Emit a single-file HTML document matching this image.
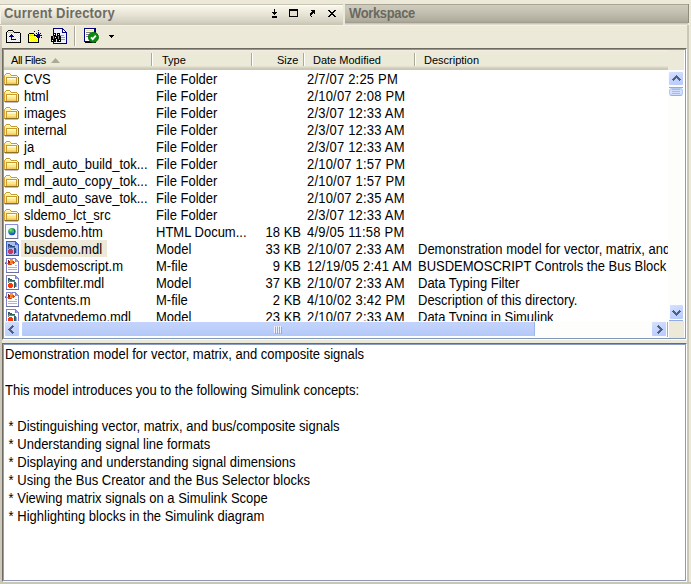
<!DOCTYPE html>
<html><head><meta charset="utf-8">
<style>
*{box-sizing:border-box}
html,body{margin:0;padding:0}
body{width:691px;height:584px;overflow:hidden;position:relative;background:#ECE9D8;font-family:"Liberation Sans",sans-serif;color:#000}
.a{position:absolute}
.t{position:absolute;white-space:pre;font-size:13px;line-height:17px}
.r{position:absolute;white-space:pre;font-size:13px;line-height:17px;transform:scaleY(1.08);transform-origin:0 13px}
.h{position:absolute;white-space:pre;font-size:11px;line-height:13px}
svg{position:absolute;overflow:visible}
</style></head><body>
<svg width="0" height="0" style="position:absolute"><defs><symbol id="i-folder" viewBox="0 0 16 16"><path fill="#C79B2C" d="M3 2h4v1h-4zM2 3h1v1h-1zM7 3h1v1h-1zM8 4h6v1h-6zM14 5h1v1h-1zM3 6h11v1h-11zM3 7h1v1h-1zM13 7h1v1h-1zM3 8h1v1h-1zM13 8h1v1h-1zM3 9h1v1h-1zM13 9h1v1h-1zM3 10h1v1h-1zM13 10h1v1h-1zM3 11h1v1h-1zM13 11h1v1h-1zM3 12h1v1h-1zM13 12h1v1h-1z"/><path fill="#FFFDE6" d="M3 3h4v1h-4zM8 5h6v1h-6zM4 7h9v1h-9z"/><path fill="#E3A83A" d="M1 4h1v1h-1zM1 5h1v1h-1zM1 6h1v1h-1zM1 7h1v1h-1zM1 8h1v1h-1zM1 9h1v1h-1zM1 10h1v1h-1zM1 11h1v1h-1zM1 12h1v1h-1z"/><path fill="#FFEF98" d="M2 4h6v1h-6zM2 5h6v1h-6zM2 6h1v1h-1zM14 6h1v1h-1zM2 7h1v1h-1zM14 7h1v1h-1zM2 8h1v1h-1zM14 8h1v1h-1zM2 9h1v1h-1zM14 9h1v1h-1zM2 10h1v1h-1zM14 10h1v1h-1zM2 11h1v1h-1zM14 11h1v1h-1zM2 12h1v1h-1zM14 12h1v1h-1z"/><path fill="#8C7222" d="M15 6h1v1h-1zM15 7h1v1h-1zM15 8h1v1h-1zM15 9h1v1h-1zM15 10h1v1h-1zM15 11h1v1h-1zM15 12h1v1h-1zM2 13h13v1h-13z"/><path fill="#FFF3A6" d="M4 8h9v1h-9z"/><path fill="#FEE68C" d="M4 9h9v1h-9zM4 10h9v1h-9z"/><path fill="#F9D66E" d="M4 11h9v1h-9z"/><path fill="#F5CA5C" d="M4 12h9v1h-9z"/><path fill="#B89A60" d="M1 13h1v1h-1zM15 13h1v1h-1z"/><path fill="#C2BCCB" d="M2 14h13v1h-13z"/></symbol><symbol id="i-html" viewBox="0 0 16 16"><path fill="#8A8FD6" d="M1 1h13v1h-13zM1 2h1v1h-1zM13 2h1v1h-1zM1 3h1v1h-1zM13 3h1v1h-1zM1 4h1v1h-1zM13 4h1v1h-1zM1 5h1v1h-1zM13 5h1v1h-1zM1 6h1v1h-1zM13 6h1v1h-1zM1 7h1v1h-1zM13 7h1v1h-1zM1 8h1v1h-1zM13 8h1v1h-1zM1 9h1v1h-1zM13 9h1v1h-1zM1 10h1v1h-1zM13 10h1v1h-1zM1 11h1v1h-1zM13 11h1v1h-1zM1 12h1v1h-1zM13 12h1v1h-1zM1 13h1v1h-1zM13 13h1v1h-1zM1 14h1v1h-1zM13 14h1v1h-1z"/><path fill="#F6F9FF" d="M2 2h11v1h-11zM2 3h11v1h-11zM2 4h11v1h-11zM2 5h11v1h-11zM2 6h11v1h-11zM2 7h11v1h-11zM2 8h11v1h-11zM2 9h11v1h-11zM2 10h11v1h-11zM2 11h11v1h-11zM2 12h11v1h-11zM2 13h11v1h-11zM2 14h11v1h-11z"/><path fill="#CFD0EC" d="M14 2h1v1h-1zM14 3h1v1h-1zM14 4h1v1h-1zM14 5h1v1h-1zM14 6h1v1h-1zM14 7h1v1h-1zM14 8h1v1h-1zM14 9h1v1h-1zM14 10h1v1h-1zM14 11h1v1h-1zM14 12h1v1h-1zM14 13h1v1h-1zM14 14h1v1h-1zM14 15h1v1h-1z"/><path fill="#6A6C8C" d="M1 15h13v1h-13z"/><defs><radialGradient id="gl" cx="0.35" cy="0.3" r="0.8"><stop offset="0" stop-color="#9BE86A"/><stop offset="0.35" stop-color="#2FB03A"/><stop offset="0.6" stop-color="#1E70C8"/><stop offset="1" stop-color="#1530C0"/></radialGradient></defs><circle cx="7.9" cy="8.6" r="3.7" fill="url(#gl)" shape-rendering="geometricPrecision"/><path d="M8.6 7.2 l1.6 0.6 l-0.4 1.8 l-1.4 0.2z" fill="#38B8F0" shape-rendering="geometricPrecision"/><path d="M9.9 6.4 l1.2 1.2 l-0.1 1.9 l-0.9 -0.5z" fill="#0F7A22" shape-rendering="geometricPrecision"/></symbol><symbol id="i-m" viewBox="0 0 16 16"><path fill="#7F84CC" d="M2 1h10v1h-10zM2 2h1v1h-1zM11 2h2v1h-2zM2 3h1v1h-1zM11 3h1v1h-1zM13 3h1v1h-1zM2 4h1v1h-1zM11 4h1v1h-1zM14 4h1v1h-1zM2 5h1v1h-1zM14 5h1v1h-1zM2 6h1v1h-1zM14 6h1v1h-1zM2 7h1v1h-1zM14 7h1v1h-1zM2 8h1v1h-1zM14 8h1v1h-1zM2 9h1v1h-1zM14 9h1v1h-1zM2 10h1v1h-1zM14 10h1v1h-1zM2 11h1v1h-1zM14 11h1v1h-1zM2 12h1v1h-1zM14 12h1v1h-1zM2 13h1v1h-1zM14 13h1v1h-1zM2 14h1v1h-1zM14 14h1v1h-1z"/><path fill="#FFFFFF" d="M3 2h8v1h-8zM3 3h8v1h-8zM3 4h8v1h-8zM3 5h11v1h-11zM3 6h11v1h-11zM3 7h11v1h-11zM3 8h11v1h-11zM3 9h11v1h-11zM3 10h11v1h-11zM3 11h11v1h-11zM3 12h11v1h-11zM3 13h11v1h-11zM3 14h11v1h-11z"/><path fill="#9AA0D8" d="M12 3h1v1h-1zM12 4h2v1h-2z"/><path fill="#6E6F98" d="M2 15h13v1h-13z"/><path fill="#B4B4C4" d="M11 8h2v1h-2zM4 10h9v1h-9zM4 12h9v1h-9z"/><path fill="#F7902E" d="M7 1h1v1h-1zM6 2h3v1h-3zM6 3h3v1h-3zM6 4h2v1h-2zM6 5h1v1h-1zM6 6h3v1h-3z"/><path fill="#8E1A1A" d="M4 3h1v1h-1zM4 4h2v1h-2zM4 5h2v1h-2z"/><path fill="#F06A20" d="M8 4h1v1h-1zM7 5h2v1h-2zM7 7h1v1h-1z"/><path fill="#D8400E" d="M9 4h1v1h-1zM9 5h2v1h-2zM4 6h2v1h-2zM9 6h1v1h-1zM4 7h3v1h-3z"/><path fill="#5AAAD8" d="M1 5h1v1h-1zM2 6h2v1h-2z"/><path fill="#2A6CA0" d="M1 6h1v1h-1z"/></symbol><symbol id="i-mdl" viewBox="0 0 16 16"><path fill="#7F84CC" d="M2 1h10v1h-10zM2 2h1v1h-1zM11 2h2v1h-2zM2 3h1v1h-1zM11 3h1v1h-1zM13 3h1v1h-1zM2 4h1v1h-1zM11 4h1v1h-1zM14 4h1v1h-1zM2 5h1v1h-1zM14 5h1v1h-1zM2 6h1v1h-1zM14 6h1v1h-1zM2 7h1v1h-1zM14 7h1v1h-1zM2 8h1v1h-1zM14 8h1v1h-1zM2 9h1v1h-1zM14 9h1v1h-1zM2 10h1v1h-1zM14 10h1v1h-1zM2 11h1v1h-1zM14 11h1v1h-1zM2 12h1v1h-1zM14 12h1v1h-1zM2 13h1v1h-1zM14 13h1v1h-1zM2 14h1v1h-1zM14 14h1v1h-1z"/><path fill="#FFFFFF" d="M3 2h8v1h-8zM3 3h8v1h-8zM3 4h8v1h-8zM3 5h11v1h-11zM3 6h11v1h-11zM3 7h11v1h-11zM3 8h11v1h-11zM3 9h11v1h-11zM3 10h11v1h-11zM3 11h11v1h-11zM3 12h11v1h-11zM3 13h11v1h-11zM3 14h11v1h-11z"/><path fill="#9AA0D8" d="M12 3h1v1h-1zM12 4h2v1h-2z"/><path fill="#6E6F98" d="M2 15h13v1h-13z"/><path fill="#2F5F5E" d="M4 4h2v1h-2zM4 5h4v1h-4zM4 6h1v1h-1zM6 6h5v1h-5zM10 8h1v1h-1zM10 9h1v1h-1zM10 10h1v1h-1zM10 11h1v1h-1zM10 12h1v1h-1zM10 13h1v1h-1z"/><path fill="#D08030" d="M5 6h1v1h-1z"/><path fill="#6A8A70" d="M4 7h7v1h-7zM4 8h1v1h-1z"/><path fill="#4A5CA8" d="M11 8h1v1h-1zM11 9h1v1h-1zM11 10h1v1h-1zM11 11h1v1h-1zM11 12h1v1h-1z"/><path fill="#FA3A06" d="M5 9h3v1h-3zM4 10h5v1h-5zM4 11h5v1h-5zM4 12h5v1h-5zM5 13h3v1h-3z"/><path fill="#8FA8E8" d="M12 9h1v1h-1zM12 10h1v1h-1zM12 11h1v1h-1zM12 12h1v1h-1z"/></symbol><symbol id="i-mdlsel" viewBox="0 0 16 16"><path fill="#3F60C4" d="M2 1h10v1h-10zM2 2h1v1h-1zM11 2h2v1h-2zM2 3h1v1h-1zM11 3h1v1h-1zM13 3h1v1h-1zM2 4h1v1h-1zM11 4h1v1h-1zM14 4h1v1h-1zM2 5h1v1h-1zM14 5h1v1h-1zM2 6h1v1h-1zM14 6h1v1h-1zM2 7h1v1h-1zM14 7h1v1h-1zM2 8h1v1h-1zM14 8h1v1h-1zM2 9h1v1h-1zM14 9h1v1h-1zM2 10h1v1h-1zM14 10h1v1h-1zM2 11h1v1h-1zM14 11h1v1h-1zM2 12h1v1h-1zM14 12h1v1h-1zM2 13h1v1h-1zM14 13h1v1h-1zM2 14h1v1h-1zM14 14h1v1h-1z"/><path fill="#A9BEEE" d="M3 2h8v1h-8zM3 3h8v1h-8zM3 4h8v1h-8zM3 5h11v1h-11zM3 6h11v1h-11zM3 7h11v1h-11zM3 8h11v1h-11zM3 9h11v1h-11zM3 10h11v1h-11zM3 11h11v1h-11zM3 12h11v1h-11zM3 13h11v1h-11zM3 14h11v1h-11z"/><path fill="#5A78D0" d="M12 3h1v1h-1zM12 4h2v1h-2z"/><path fill="#3A4C98" d="M2 15h13v1h-13z"/><path fill="#2C4C80" d="M4 4h2v1h-2zM4 5h4v1h-4zM4 6h1v1h-1zM6 6h5v1h-5zM10 8h1v1h-1zM10 9h1v1h-1zM10 10h1v1h-1zM10 11h1v1h-1zM10 12h1v1h-1zM10 13h1v1h-1z"/><path fill="#8A70A0" d="M5 6h1v1h-1z"/><path fill="#5A78B0" d="M4 7h7v1h-7zM4 8h1v1h-1z"/><path fill="#3048A8" d="M11 8h1v1h-1zM11 9h1v1h-1zM11 10h1v1h-1zM11 11h1v1h-1zM11 12h1v1h-1z"/><path fill="#C03A62" d="M5 9h3v1h-3zM4 10h5v1h-5zM4 11h5v1h-5zM4 12h5v1h-5zM5 13h3v1h-3z"/><path fill="#7F9AE8" d="M12 9h1v1h-1zM12 10h1v1h-1zM12 11h1v1h-1zM12 12h1v1h-1z"/></symbol></defs></svg>
<!-- outer edges -->
<div class="a" style="left:0;top:25px;width:1px;height:559px;background:#CEC8BC"></div>
<div class="a" style="left:1px;top:25px;width:1px;height:559px;background:#CACCB8"></div>
<div class="a" style="left:687px;top:25px;width:1px;height:559px;background:#CFC6B9"></div>
<div class="a" style="left:688px;top:25px;width:1px;height:559px;background:#C9C7B4"></div>
<div class="a" style="left:0;top:582px;width:691px;height:2px;background:#C8C6B4"></div>

<!-- title bar Current Directory -->
<div class="a" style="left:0;top:4px;width:343px;height:21px;background:linear-gradient(#C8C5B5 0,#C8C5B5 1px,#FFFFF4 1px,#F6F4E8 3px,#E6E3D4 11px,#D3D0C1 18px,#CAC7B7 20px,#CAC7B7 21px)"></div>
<div class="a" style="left:0;top:5px;width:1px;height:19px;background:#F4F2E6"></div>
<div class="t" style="left:4px;top:5px;font-weight:bold;color:#6E6C63;line-height:17px;letter-spacing:0.19px;transform:scaleY(1.1);transform-origin:0 13px">Current Directory</div>
<svg width="80" height="12" style="left:270px;top:8px" shape-rendering="crispEdges">
 <path fill="#000" d="M4 1h1v4h-1z M2 4h5v1h-5z M3 5h3v1h-3z M4 6h1v1h-1z M2 8h5v2h-5z"/>
 <path fill="#000" d="M19 1h9v2h-9z M19 3h1v6h-1z M27 3h1v6h-1z M19 8h9v1h-9z"/>
 <path fill="#E2DFD2" d="M20 3h7v5h-7z"/>
 <path fill="#000" d="M41 2h4v1h-4z M42 3h3v1h-3z M41 4h4v1h-4z M40 5h3v1h-3z M44 5h1v1h-1z M40 6h2v1h-2z M40 7h1v1h-1z M41 8h1v1h-1z"/>
 <path fill="#000" d="M58 2h2v1h-2z M64 2h2v1h-2z M59 3h2v1h-2z M63 3h2v1h-2z M60 4h4v1h-4z M61 5h2v1h-2z M60 6h4v1h-4z M59 7h2v1h-2z M63 7h2v1h-2z M58 8h2v1h-2z M64 8h2v1h-2z"/>
</svg>

<!-- workspace tab -->
<div class="a" style="left:345px;top:4px;width:344px;height:19px;background:linear-gradient(#A9A697 0,#A9A697 1px,#CFCCBD 1px,#C4C1B2 8px,#AEAB9C 17px,#9E9B8D 19px);border-right:1px solid #8F8C7E"></div>
<div class="a" style="left:345px;top:23px;width:343px;height:1px;background:#C8C6B8"></div>
<div class="a" style="left:345px;top:24px;width:343px;height:1px;background:#DEDBCE"></div>
<div class="t" style="left:349px;top:5px;font-weight:bold;color:#6A695F;letter-spacing:-0.35px;transform:scaleY(1.1);transform-origin:0 13px">Workspace</div>

<!-- toolbar top highlight -->
<div class="a" style="left:0;top:25px;width:687px;height:1px;background:#F3F1E6"></div>
<svg width="16" height="16" style="left:5px;top:28px" shape-rendering="crispEdges"><path fill="#000000" d="M3 2h5v1h-5zM2 3h1v1h-1zM8 3h1v1h-1zM1 4h1v1h-1zM9 4h6v1h-6zM1 5h1v1h-1zM15 5h1v1h-1zM1 6h1v1h-1zM15 6h1v1h-1zM1 7h1v1h-1zM15 7h1v1h-1zM1 8h1v1h-1zM15 8h1v1h-1zM1 9h1v1h-1zM15 9h1v1h-1zM1 10h1v1h-1zM15 10h1v1h-1zM1 11h1v1h-1zM15 11h1v1h-1zM1 12h1v1h-1zM15 12h1v1h-1zM1 13h1v1h-1zM15 13h1v1h-1zM1 14h15v1h-15z"/><path fill="#FFFF00" d="M3 3h1v1h-1zM5 3h1v1h-1zM7 3h1v1h-1zM2 4h1v1h-1zM3 5h1v1h-1zM5 5h1v1h-1zM7 5h1v1h-1zM9 5h1v1h-1zM11 5h1v1h-1zM13 5h1v1h-1zM2 6h1v1h-1zM4 6h1v1h-1zM8 6h1v1h-1zM10 6h1v1h-1zM12 6h1v1h-1zM14 6h1v1h-1zM3 7h1v1h-1zM9 7h1v1h-1zM11 7h1v1h-1zM13 7h1v1h-1zM2 8h1v1h-1zM10 8h1v1h-1zM12 8h1v1h-1zM14 8h1v1h-1zM3 9h1v1h-1zM5 9h1v1h-1zM7 9h1v1h-1zM9 9h1v1h-1zM11 9h1v1h-1zM13 9h1v1h-1zM2 10h1v1h-1zM4 10h1v1h-1zM8 10h1v1h-1zM10 10h1v1h-1zM12 10h1v1h-1zM14 10h1v1h-1zM3 11h1v1h-1zM5 11h1v1h-1zM11 11h1v1h-1zM13 11h1v1h-1zM2 12h1v1h-1zM4 12h1v1h-1zM6 12h1v1h-1zM8 12h1v1h-1zM10 12h1v1h-1zM12 12h1v1h-1zM14 12h1v1h-1zM3 13h1v1h-1zM5 13h1v1h-1zM7 13h1v1h-1zM9 13h1v1h-1zM11 13h1v1h-1zM13 13h1v1h-1z"/><path fill="#FFFFFF" d="M4 3h1v1h-1zM6 3h1v1h-1zM2 5h1v1h-1zM4 5h1v1h-1zM6 5h1v1h-1zM8 5h1v1h-1zM10 5h1v1h-1zM12 5h1v1h-1zM14 5h1v1h-1zM3 6h1v1h-1zM5 6h1v1h-1zM7 6h1v1h-1zM9 6h1v1h-1zM11 6h1v1h-1zM13 6h1v1h-1zM2 7h1v1h-1zM4 7h1v1h-1zM8 7h1v1h-1zM10 7h1v1h-1zM12 7h1v1h-1zM14 7h1v1h-1zM3 8h1v1h-1zM9 8h1v1h-1zM11 8h1v1h-1zM13 8h1v1h-1zM2 9h1v1h-1zM4 9h1v1h-1zM8 9h1v1h-1zM10 9h1v1h-1zM12 9h1v1h-1zM14 9h1v1h-1zM3 10h1v1h-1zM5 10h1v1h-1zM7 10h1v1h-1zM9 10h1v1h-1zM11 10h1v1h-1zM13 10h1v1h-1zM2 11h1v1h-1zM4 11h1v1h-1zM12 11h1v1h-1zM14 11h1v1h-1zM3 12h1v1h-1zM5 12h1v1h-1zM7 12h1v1h-1zM9 12h1v1h-1zM11 12h1v1h-1zM13 12h1v1h-1zM2 13h1v1h-1zM4 13h1v1h-1zM6 13h1v1h-1zM8 13h1v1h-1zM10 13h1v1h-1zM12 13h1v1h-1zM14 13h1v1h-1z"/><path fill="#C8C8B8" d="M3 4h6v1h-6z"/><path fill="#000080" d="M6 6h1v1h-1zM5 7h3v1h-3zM4 8h5v1h-5zM6 9h1v1h-1zM6 10h1v1h-1zM6 11h5v1h-5z"/></svg>
<svg width="16" height="16" style="left:26px;top:28px" shape-rendering="crispEdges"><path fill="#000000" d="M12 2h1v1h-1zM8 3h1v1h-1zM3 5h5v1h-5zM2 6h1v1h-1zM8 6h1v1h-1zM2 7h1v1h-1zM8 7h2v1h-2zM2 8h1v1h-1zM2 9h1v1h-1zM12 9h1v1h-1zM2 10h1v1h-1zM12 10h1v1h-1zM2 11h1v1h-1zM12 11h1v1h-1zM2 12h1v1h-1zM12 12h1v1h-1zM2 13h1v1h-1zM12 13h1v1h-1zM2 14h11v1h-11z"/><path fill="#000080" d="M12 4h1v1h-1zM10 5h1v1h-1zM12 5h1v1h-1zM14 5h1v1h-1zM11 6h3v1h-3zM10 7h6v1h-6zM10 8h4v1h-4zM11 9h1v1h-1zM13 9h1v1h-1zM15 9h1v1h-1z"/><path fill="#FFFFFF" d="M3 6h1v1h-1zM5 6h1v1h-1zM7 6h1v1h-1zM3 8h1v1h-1zM5 8h1v1h-1zM7 8h1v1h-1zM9 8h1v1h-1zM4 9h1v1h-1zM6 9h1v1h-1zM8 9h1v1h-1zM10 9h1v1h-1zM3 10h1v1h-1zM5 10h1v1h-1zM7 10h1v1h-1zM9 10h1v1h-1zM11 10h1v1h-1zM4 11h1v1h-1zM6 11h1v1h-1zM8 11h1v1h-1zM10 11h1v1h-1zM3 12h1v1h-1zM5 12h1v1h-1zM7 12h1v1h-1zM9 12h1v1h-1zM11 12h1v1h-1zM4 13h1v1h-1zM6 13h1v1h-1zM8 13h1v1h-1zM10 13h1v1h-1z"/><path fill="#FFFF00" d="M4 6h1v1h-1zM6 6h1v1h-1zM4 8h1v1h-1zM6 8h1v1h-1zM8 8h1v1h-1zM3 9h1v1h-1zM5 9h1v1h-1zM7 9h1v1h-1zM9 9h1v1h-1zM4 10h1v1h-1zM6 10h1v1h-1zM8 10h1v1h-1zM10 10h1v1h-1zM3 11h1v1h-1zM5 11h1v1h-1zM7 11h1v1h-1zM9 11h1v1h-1zM11 11h1v1h-1zM4 12h1v1h-1zM6 12h1v1h-1zM8 12h1v1h-1zM10 12h1v1h-1zM3 13h1v1h-1zM5 13h1v1h-1zM7 13h1v1h-1zM9 13h1v1h-1zM11 13h1v1h-1z"/><path fill="#C8C8B8" d="M3 7h5v1h-5z"/></svg>
<svg width="18" height="18" style="left:50px;top:27px" shape-rendering="crispEdges"><path fill="#000080" d="M3 1h10v1h-10zM3 2h1v1h-1zM12 2h2v1h-2zM3 3h1v1h-1zM12 3h1v1h-1zM14 3h1v1h-1zM3 4h1v1h-1zM12 4h1v1h-1zM15 4h1v1h-1zM3 5h1v1h-1zM12 5h5v1h-5zM16 6h1v1h-1zM16 7h1v1h-1zM16 8h1v1h-1zM16 9h1v1h-1zM16 10h1v1h-1zM16 11h1v1h-1zM16 12h1v1h-1zM16 13h1v1h-1zM16 14h1v1h-1zM3 15h1v1h-1zM16 15h1v1h-1zM3 16h14v1h-14z"/><path fill="#EEF2FF" d="M4 2h8v1h-8zM4 3h8v1h-8zM4 4h8v1h-8zM4 5h8v1h-8zM10 6h6v1h-6zM10 7h6v1h-6zM14 8h2v1h-2zM11 9h5v1h-5zM15 10h1v1h-1zM11 11h5v1h-5zM15 12h1v1h-1zM11 13h5v1h-5zM11 14h5v1h-5zM4 15h12v1h-12z"/><path fill="#FFFFFF" d="M13 3h1v1h-1zM13 4h2v1h-2zM4 7h1v1h-1zM8 7h1v1h-1zM5 10h1v1h-1zM2 13h1v1h-1zM9 13h1v1h-1z"/><path fill="#000000" d="M3 6h3v1h-3zM7 6h3v1h-3zM3 7h1v1h-1zM5 7h1v1h-1zM7 7h1v1h-1zM9 7h1v1h-1zM3 8h3v1h-3zM7 8h3v1h-3zM1 9h2v1h-2zM4 9h4v1h-4zM9 9h2v1h-2zM1 10h2v1h-2zM4 10h1v1h-1zM6 10h2v1h-2zM9 10h2v1h-2zM1 11h2v1h-2zM4 11h4v1h-4zM9 11h2v1h-2zM1 12h5v1h-5zM7 12h4v1h-4zM1 13h1v1h-1zM3 13h3v1h-3zM7 13h2v1h-2zM10 13h1v1h-1zM1 14h5v1h-5zM7 14h4v1h-4z"/><path fill="#9A9AAA" d="M10 8h4v1h-4zM11 10h4v1h-4zM11 12h4v1h-4z"/><path fill="#8C8C8C" d="M3 9h1v1h-1zM8 9h1v1h-1zM3 10h1v1h-1zM8 10h1v1h-1zM3 11h1v1h-1zM8 11h1v1h-1z"/></svg>
<svg width="18" height="18" style="left:82px;top:26px"><path fill="#000080" d="M2 2h11v1h-11zM2 3h1v1h-1zM12 3h1v1h-1zM2 4h1v1h-1zM12 4h1v1h-1zM2 5h1v1h-1zM12 5h1v1h-1zM2 6h1v1h-1zM12 6h1v1h-1zM2 7h1v1h-1zM12 7h1v1h-1zM2 8h1v1h-1zM12 8h1v1h-1zM2 9h1v1h-1zM12 9h1v1h-1zM2 10h1v1h-1zM12 10h1v1h-1zM2 11h1v1h-1zM12 11h1v1h-1zM2 12h1v1h-1zM12 12h1v1h-1zM2 13h1v1h-1zM12 13h1v1h-1zM2 14h1v1h-1zM12 14h1v1h-1zM2 15h11v1h-11z"/><path fill="#000000" d="M13 2h1v1h-1zM13 3h1v1h-1zM13 4h1v1h-1zM13 5h1v1h-1zM13 6h1v1h-1zM13 7h1v1h-1zM13 8h1v1h-1zM13 9h1v1h-1zM13 10h1v1h-1zM13 11h1v1h-1zM13 12h1v1h-1zM13 13h1v1h-1zM13 14h1v1h-1zM13 15h1v1h-1zM3 16h11v1h-11z"/><path fill="#FFFFFF" d="M3 3h9v1h-9zM3 4h1v1h-1zM11 4h1v1h-1zM3 5h9v1h-9zM3 6h1v1h-1zM9 6h3v1h-3zM3 7h9v1h-9zM3 8h1v1h-1zM9 8h3v1h-3zM3 9h9v1h-9zM3 10h1v1h-1zM9 10h3v1h-3zM3 11h9v1h-9zM3 12h9v1h-9zM3 13h9v1h-9zM3 14h9v1h-9z"/><path fill="#E8E8A0" d="M4 4h7v1h-7z"/><path fill="#808090" d="M4 6h5v1h-5zM4 8h5v1h-5zM4 10h5v1h-5z"/><circle cx="11.4" cy="11.2" r="5.3" fill="#0B8A12"/><circle cx="11.4" cy="11.2" r="5.0" fill="none" stroke="#067008" stroke-width="0.8"/><path d="M9 11.4 L10.7 13.2 L13.8 9.6" fill="none" stroke="#FFFFFF" stroke-width="1.8"/></svg>
<div class="a" style="left:74px;top:26px;width:1px;height:20px;background:#ACA899"></div>
<div class="a" style="left:75px;top:26px;width:1px;height:20px;background:#FFFFFF"></div>
<svg width="5" height="3" style="left:109px;top:35px" shape-rendering="crispEdges"><path fill="#000" d="M0 0h5v1h-5z M1 1h3v1h-3z M2 2h1v1h-1z"/></svg>

<!-- list frame -->
<div class="a" style="left:2px;top:48px;width:685px;height:292px;border-top:1px solid #6E6B60;border-left:1px solid #6E6B60;border-right:1px solid #FFFFFF;border-bottom:1px solid #FFFFFF"></div>
<div class="a" style="left:3px;top:49px;width:683px;height:290px;border:1px solid #7F98BC;border-right-color:#8A9FAE;background:#fff"></div>

<!-- header -->
<div class="a" style="left:4px;top:50px;width:664px;height:20px;background:linear-gradient(#F4EEE2 0,#F4EEE2 1px,#E6EEE4 1px,#E6EEE4 2px,#EFE8DA 2px,#EBEAD8 4px,#EBEAD8 16px,#E3E1CE 16px,#E3E1CE 17px,#D8D5C4 17px,#D8D5C4 18px,#CECBBA 18px,#CAC7B6 20px)"></div>
<div class="a" style="left:668px;top:50px;width:16px;height:20px;background:#ECE9D8"></div>

<!-- header separators -->
<div class="a" style="left:151px;top:53px;width:1px;height:13px;background:#ACA899"></div>
<div class="a" style="left:152px;top:53px;width:1px;height:13px;background:#FFFFFF"></div>
<div class="a" style="left:251px;top:53px;width:1px;height:13px;background:#ACA899"></div>
<div class="a" style="left:252px;top:53px;width:1px;height:13px;background:#FFFFFF"></div>
<div class="a" style="left:303px;top:53px;width:1px;height:13px;background:#ACA899"></div>
<div class="a" style="left:304px;top:53px;width:1px;height:13px;background:#FFFFFF"></div>
<div class="a" style="left:414px;top:53px;width:1px;height:13px;background:#ACA899"></div>
<div class="a" style="left:415px;top:53px;width:1px;height:13px;background:#FFFFFF"></div>

<div class="h" style="left:11px;top:54px;letter-spacing:-0.4px">All Files</div>
<svg width="9" height="5" style="left:51px;top:58px"><path d="M4.5 0 L9 5 L0 5Z" fill="#ACA899"/></svg>
<div class="h" style="left:162px;top:54px">Type</div>
<div class="h" style="left:277px;top:54px">Size</div>
<div class="h" style="left:313px;top:54px">Date Modified</div>
<div class="h" style="left:424px;top:54px">Description</div>

<!-- rows container -->
<div id="rows" class="a" style="left:4px;top:70px;width:664px;height:251px;overflow:hidden;background:#fff">
<svg width="16" height="16" style="left:-1px;top:1px" shape-rendering="crispEdges"><use href="#i-folder"/></svg>
<div class="r" style="left:20px;top:1px">CVS</div>
<div class="r" style="left:152px;top:1px">File Folder</div>
<div class="r" style="left:303px;top:1px;letter-spacing:0.2px">2/7/07 2:25 PM</div>
<svg width="16" height="16" style="left:-1px;top:18px" shape-rendering="crispEdges"><use href="#i-folder"/></svg>
<div class="r" style="left:20px;top:18px">html</div>
<div class="r" style="left:152px;top:18px">File Folder</div>
<div class="r" style="left:303px;top:18px;letter-spacing:0.2px">2/10/07 2:08 PM</div>
<svg width="16" height="16" style="left:-1px;top:35px" shape-rendering="crispEdges"><use href="#i-folder"/></svg>
<div class="r" style="left:20px;top:35px">images</div>
<div class="r" style="left:152px;top:35px">File Folder</div>
<div class="r" style="left:303px;top:35px;letter-spacing:0.2px">2/3/07 12:33 AM</div>
<svg width="16" height="16" style="left:-1px;top:52px" shape-rendering="crispEdges"><use href="#i-folder"/></svg>
<div class="r" style="left:20px;top:52px">internal</div>
<div class="r" style="left:152px;top:52px">File Folder</div>
<div class="r" style="left:303px;top:52px;letter-spacing:0.2px">2/3/07 12:33 AM</div>
<svg width="16" height="16" style="left:-1px;top:69px" shape-rendering="crispEdges"><use href="#i-folder"/></svg>
<div class="r" style="left:20px;top:69px">ja</div>
<div class="r" style="left:152px;top:69px">File Folder</div>
<div class="r" style="left:303px;top:69px;letter-spacing:0.2px">2/3/07 12:33 AM</div>
<svg width="16" height="16" style="left:-1px;top:86px" shape-rendering="crispEdges"><use href="#i-folder"/></svg>
<div class="r" style="left:20px;top:86px">mdl_auto_build_tok...</div>
<div class="r" style="left:152px;top:86px">File Folder</div>
<div class="r" style="left:303px;top:86px;letter-spacing:0.2px">2/10/07 1:57 PM</div>
<svg width="16" height="16" style="left:-1px;top:103px" shape-rendering="crispEdges"><use href="#i-folder"/></svg>
<div class="r" style="left:20px;top:103px">mdl_auto_copy_tok...</div>
<div class="r" style="left:152px;top:103px">File Folder</div>
<div class="r" style="left:303px;top:103px;letter-spacing:0.2px">2/10/07 1:57 PM</div>
<svg width="16" height="16" style="left:-1px;top:120px" shape-rendering="crispEdges"><use href="#i-folder"/></svg>
<div class="r" style="left:20px;top:120px">mdl_auto_save_tok...</div>
<div class="r" style="left:152px;top:120px">File Folder</div>
<div class="r" style="left:303px;top:120px;letter-spacing:0.2px">2/10/07 2:35 AM</div>
<svg width="16" height="16" style="left:-1px;top:137px" shape-rendering="crispEdges"><use href="#i-folder"/></svg>
<div class="r" style="left:20px;top:137px">sldemo_lct_src</div>
<div class="r" style="left:152px;top:137px">File Folder</div>
<div class="r" style="left:303px;top:137px;letter-spacing:0.2px">2/3/07 12:33 AM</div>
<svg width="16" height="16" style="left:0px;top:153px" shape-rendering="crispEdges"><use href="#i-html"/></svg>
<div class="r" style="left:20px;top:154px">busdemo.htm</div>
<div class="r" style="left:152px;top:154px">HTML Docum...</div>
<div class="r" style="left:201px;top:154px;width:96px;text-align:right">18 KB</div>
<div class="r" style="left:303px;top:154px;letter-spacing:0.2px">4/9/05 11:58 PM</div>
<div class="a" style="left:17px;top:170px;width:86px;height:17px;background:#ECE9D8"></div>
<svg width="16" height="16" style="left:0px;top:170px" shape-rendering="crispEdges"><use href="#i-mdlsel"/></svg>
<div class="r" style="left:20px;top:171px">busdemo.mdl</div>
<div class="r" style="left:152px;top:171px">Model</div>
<div class="r" style="left:201px;top:171px;width:96px;text-align:right">33 KB</div>
<div class="r" style="left:303px;top:171px;letter-spacing:0.2px">2/10/07 2:33 AM</div>
<div class="r" style="left:414px;top:171px">Demonstration model for vector, matrix, and composite signals</div>
<svg width="16" height="16" style="left:0px;top:187px" shape-rendering="crispEdges"><use href="#i-m"/></svg>
<div class="r" style="left:20px;top:188px">busdemoscript.m</div>
<div class="r" style="left:152px;top:188px">M-file</div>
<div class="r" style="left:201px;top:188px;width:96px;text-align:right">9 KB</div>
<div class="r" style="left:303px;top:188px;letter-spacing:0.2px">12/19/05 2:41 AM</div>
<div class="r" style="left:414px;top:188px">BUSDEMOSCRIPT Controls the Bus Block demo</div>
<svg width="16" height="16" style="left:0px;top:204px" shape-rendering="crispEdges"><use href="#i-mdl"/></svg>
<div class="r" style="left:20px;top:205px">combfilter.mdl</div>
<div class="r" style="left:152px;top:205px">Model</div>
<div class="r" style="left:201px;top:205px;width:96px;text-align:right">37 KB</div>
<div class="r" style="left:303px;top:205px;letter-spacing:0.2px">2/10/07 2:33 AM</div>
<div class="r" style="left:414px;top:205px">Data Typing Filter</div>
<svg width="16" height="16" style="left:0px;top:221px" shape-rendering="crispEdges"><use href="#i-m"/></svg>
<div class="r" style="left:20px;top:222px">Contents.m</div>
<div class="r" style="left:152px;top:222px">M-file</div>
<div class="r" style="left:201px;top:222px;width:96px;text-align:right">2 KB</div>
<div class="r" style="left:303px;top:222px;letter-spacing:0.2px">4/10/02 3:42 PM</div>
<div class="r" style="left:414px;top:222px">Description of this directory.</div>
<svg width="16" height="16" style="left:0px;top:238px" shape-rendering="crispEdges"><use href="#i-mdl"/></svg>
<div class="r" style="left:20px;top:239px">datatypedemo.mdl</div>
<div class="r" style="left:152px;top:239px">Model</div>
<div class="r" style="left:201px;top:239px;width:96px;text-align:right">23 KB</div>
<div class="r" style="left:303px;top:239px;letter-spacing:0.2px">2/10/07 2:33 AM</div>
<div class="r" style="left:414px;top:239px">Data Typing in Simulink</div>
</div>

<div class="a" style="left:668px;top:70px;width:16px;height:251px;background:#FDFDFB"></div>
<div class="a" style="left:668px;top:70px;width:16px;height:2px;background:#FFFFFF"></div>
<div class="a" style="left:668px;top:71px;width:16px;height:15px;border:1px solid #FAFCFF;border-radius:2px;background:linear-gradient(160deg,#D5E1FE 0%,#C6D5FD 45%,#B7CAF8 100%)"></div>
<div class="a" style="left:669px;top:87px;width:14px;height:1px;background:#93ABE0"></div>
<svg width="9" height="6" style="left:672px;top:75px" shape-rendering="crispEdges"><path fill="#4D6185" d="M4 0h1v1h-1zM3 1h3v1h-3zM2 2h5v1h-5zM1 3h3v1h-3zM5 3h3v1h-3zM0 4h3v1h-3zM6 4h3v1h-3zM1 5h1v1h-1zM7 5h1v1h-1z"/></svg>
<div class="a" style="left:669px;top:304px;width:15px;height:16px;border:1px solid #FAFCFF;border-radius:2px;background:linear-gradient(160deg,#D5E1FE 0%,#C6D5FD 45%,#B7CAF8 100%)"></div>
<div class="a" style="left:669px;top:320px;width:14px;height:1px;background:#93ABE0"></div>
<svg width="9" height="6" style="left:672px;top:310px" shape-rendering="crispEdges"><path fill="#4D6185" d="M1 0h1v1h-1zM7 0h1v1h-1zM0 1h3v1h-3zM6 1h3v1h-3zM1 2h3v1h-3zM5 2h3v1h-3zM2 3h5v1h-5zM3 4h3v1h-3zM4 5h1v1h-1z"/></svg>
<div class="a" style="left:669px;top:88px;width:14px;height:8px;border:1px solid #B4C8F4;border-bottom-color:#94AEE6;border-radius:3px;background:#D3DFFD"></div>
<div class="a" style="left:672px;top:89px;width:8px;height:1px;background:#A2B9F2"></div>
<div class="a" style="left:672px;top:91px;width:8px;height:1px;background:#A2B9F2"></div>
<div class="a" style="left:672px;top:93px;width:8px;height:1px;background:#A2B9F2"></div>
<div class="a" style="left:4px;top:321px;width:664px;height:17px;background:#FDFDFB"></div>
<div class="a" style="left:4px;top:321px;width:16px;height:16px;border:1px solid #FAFCFF;border-radius:2px;background:linear-gradient(160deg,#D5E1FE 0%,#C6D5FD 45%,#B7CAF8 100%)"></div>
<svg width="6" height="9" style="left:8px;top:325px" shape-rendering="crispEdges"><path fill="#4D6185" d="M4 0h1v1h-1zM3 1h3v1h-3zM2 2h3v1h-3zM1 3h3v1h-3zM0 4h3v1h-3zM1 5h3v1h-3zM2 6h3v1h-3zM3 7h3v1h-3zM4 8h1v1h-1z"/></svg>
<div class="a" style="left:651px;top:321px;width:16px;height:16px;border:1px solid #FAFCFF;border-radius:2px;background:linear-gradient(160deg,#D5E1FE 0%,#C6D5FD 45%,#B7CAF8 100%)"></div>
<div class="a" style="left:667px;top:322px;width:1px;height:15px;background:#93ABE0"></div>
<svg width="6" height="9" style="left:657px;top:325px" shape-rendering="crispEdges"><path fill="#4D6185" d="M1 0h1v1h-1zM0 1h3v1h-3zM1 2h3v1h-3zM2 3h3v1h-3zM3 4h3v1h-3zM2 5h3v1h-3zM1 6h3v1h-3zM0 7h3v1h-3zM1 8h1v1h-1z"/></svg>
<div class="a" style="left:21px;top:321px;width:514px;height:16px;border:1px solid #FFFFFF;border-right-color:#9DB5EA;border-radius:2px;background:linear-gradient(#C3D3FC,#BBCEFA 60%,#B2C8F7)"></div>
<div class="a" style="left:274px;top:326px;width:1px;height:7px;background:#EEF3FF"></div>
<div class="a" style="left:275px;top:327px;width:1px;height:7px;background:#8CA9EC"></div>
<div class="a" style="left:276px;top:326px;width:1px;height:7px;background:#EEF3FF"></div>
<div class="a" style="left:277px;top:327px;width:1px;height:7px;background:#8CA9EC"></div>
<div class="a" style="left:278px;top:326px;width:1px;height:7px;background:#EEF3FF"></div>
<div class="a" style="left:279px;top:327px;width:1px;height:7px;background:#8CA9EC"></div>
<div class="a" style="left:280px;top:326px;width:1px;height:7px;background:#EEF3FF"></div>
<div class="a" style="left:281px;top:327px;width:1px;height:7px;background:#8CA9EC"></div>
<div class="a" style="left:668px;top:321px;width:16px;height:17px;background:#ECE9D8;border-left:1px solid #FFFFFF"></div>

<!-- bottom panel -->
<div class="a" style="left:2px;top:343px;width:685px;height:239px;border-top:1px solid #6E6B60;border-left:1px solid #6E6B60;border-right:1px solid #FFFFFF;border-bottom:1px solid #F8F8F4"></div>
<div class="a" style="left:3px;top:344px;width:683px;height:237px;border:1px solid #8C9CC4;border-right-color:#8A9FAE;border-bottom-color:#9097B5;background:#fff"></div>
<div class="r" style="left:5px;top:346px">Demonstration model for vector, matrix, and composite signals</div>
<div class="r" style="left:5px;top:382px">This model introduces you to the following Simulink concepts:</div>
<div class="r" style="left:5px;top:418px"> * Distinguishing vector, matrix, and bus/composite signals</div>
<div class="r" style="left:5px;top:436px"> * Understanding signal line formats</div>
<div class="r" style="left:5px;top:454px"> * Displaying and understanding signal dimensions</div>
<div class="r" style="left:5px;top:472px"> * Using the Bus Creator and the Bus Selector blocks</div>
<div class="r" style="left:5px;top:490px"> * Viewing matrix signals on a Simulink Scope</div>
<div class="r" style="left:5px;top:508px"> * Highlighting blocks in the Simulink diagram</div>

</body></html>
